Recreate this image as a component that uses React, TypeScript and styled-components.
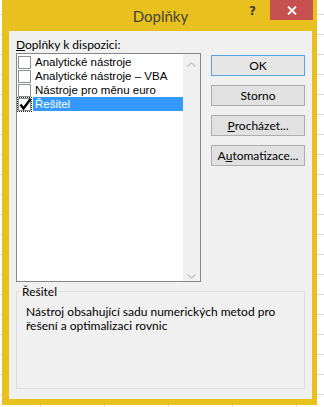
import React from 'react'
import styled, { createGlobalStyle } from 'styled-components'

const GlobalStyle = createGlobalStyle`
  html, body {
    margin: 0;
    padding: 0;
  }
  body {
    width: 324px;
    height: 407px;
    overflow: hidden;
    background-color: #fff;
    background-image:
      repeating-linear-gradient(to bottom, transparent 0, transparent 14px, #dadada 14px, #dadada 15px, transparent 15px, transparent 20px),
      repeating-linear-gradient(to right, transparent 0, transparent 40px, #dadada 40px, #dadada 41px, transparent 41px, transparent 64px);
    font-family: Lato, 'Noto Sans', sans-serif;
    font-size: 12px;
    color: #000;
  }
`

const Window = styled.div`
  margin-left: 2px;
  width: 315px;
  height: 405px;
  box-sizing: border-box;
  background: #e8c11e;
  padding: 0 5px 6px 7px;
  display: flex;
  flex-direction: column;
`

const TitleBar = styled.div`
  height: 31px;
  flex-shrink: 0;
  display: grid;
  grid-template-columns: 1fr auto 1fr;
`

const Title = styled.div`
  grid-column: 2;
  align-self: center;
  font-size: 15px;
  color: #454235;
`

const TitleControls = styled.div`
  display: flex;
  justify-content: flex-end;
  align-items: flex-start;
  margin-right: -1px;
`

const Help = styled.span`
  margin-top: 4px;
  margin-right: 14px;
  font-family: 'DejaVu Sans', sans-serif;
  font-weight: bold;
  font-size: 12px;
  color: #3a3a3a;
`

const Close = styled.div`
  width: 43px;
  height: 20px;
  background: #c75050;
  display: flex;
  align-items: center;
  justify-content: center;
`

const Client = styled.div`
  flex: 1;
  background: #f0f0f0;
  padding: 6px 7px 0 7px;
  display: grid;
  grid-template-columns: 185px 94px;
  grid-template-rows: 16px 229px auto;
  align-content: start;
  column-gap: 10px;
`

const Caption = styled.div`
  line-height: 16px;
  white-space: nowrap;
`

const Key = styled.span`
  text-decoration: underline;
`

const ListBox = styled.div`
  grid-column: 1;
  box-sizing: border-box;
  border: 1px solid #828790;
  background: #fff;
  display: flex;
`

const Items = styled.div`
  flex: 1;
  padding-top: 1px;
  font-family: 'Liberation Sans', Arial, sans-serif;
  font-size: 11.5px;
`

const Row = styled.div`
  height: 14px;
  display: flex;
  align-items: center;
`

const CheckBox = styled.span<{ $focus?: boolean }>`
  position: relative;
  width: 13px;
  height: 13px;
  box-sizing: border-box;
  margin-left: 1px;
  border: 1px solid #8e8f8f;
  background: #fff;
  flex-shrink: 0;
  outline: ${p => (p.$focus ? '1px dotted #222' : 'none')};
  outline-offset: 0;
`

const CheckMark = styled.svg`
  position: absolute;
  left: 0;
  top: -1px;
`

const ItemText = styled.span<{ $selected?: boolean }>`
  flex: 1;
  height: 14px;
  line-height: 14px;
  margin-left: 2px;
  padding-left: 2px;
  white-space: nowrap;
  background: ${p => (p.$selected ? '#3399ff' : 'transparent')};
  color: ${p => (p.$selected ? '#fff' : '#000')};
`

const ScrollBar = styled.div`
  width: 17px;
  background: #f0f0f0;
  display: flex;
  flex-direction: column;
  justify-content: space-between;
  align-items: center;
  padding: 8px 0 2px;
`

const Buttons = styled.div`
  grid-column: 2;
  grid-row: 2;
  padding-top: 2px;
  display: flex;
  flex-direction: column;
  gap: 9px;
`

const Button = styled.div<{ $default?: boolean }>`
  height: 21px;
  box-sizing: border-box;
  border: 1px solid ${p => (p.$default ? '#5aa1e6' : '#adadad')};
  background: ${p => (p.$default ? '#e6e6e6' : '#e1e1e1')};
  display: flex;
  align-items: center;
  justify-content: center;
  white-space: nowrap;
`

const Group = styled.fieldset`
  grid-column: 1 / span 2;
  grid-row: 3;
  margin: 2px 0 0;
  height: 105px;
  box-sizing: border-box;
  border: 1px solid #dcdcdc;
  padding: 6px 10px 0 9px;
`

const Legend = styled.legend`
  margin-left: -6px;
  padding: 0 2px;
  line-height: 15px;
`

const Description = styled.div`
  line-height: 14px;
`

const items = [
  { name: 'Analytické nástroje', checked: false },
  { name: 'Analytické nástroje – VBA', checked: false },
  { name: 'Nástroje pro měnu euro', checked: false },
  { name: 'Řešitel', checked: true, selected: true }
]

const Chevron = ({ up }: { up?: boolean }) => (
  <svg width='9' height='5' viewBox='0 0 9 5'>
    <polyline
      points={up ? '0.5,4.5 4.5,0.8 8.5,4.5' : '0.5,0.5 4.5,4.2 8.5,0.5'}
      fill='none'
      stroke='#c2c2c2'
      strokeWidth='1.2'
    />
  </svg>
)

const App: React.FC = () => {
  return (
    <>
      <GlobalStyle />
      <Window>
        <TitleBar>
          <Title>Doplňky</Title>
          <TitleControls>
            <Help>?</Help>
            <Close>
              <svg width='10' height='9' viewBox='0 0 10 9'>
                <path d='M1 0.5 L9 8.5 M9 0.5 L1 8.5' stroke='#fff' strokeWidth='1.8' />
              </svg>
            </Close>
          </TitleControls>
        </TitleBar>
        <Client>
          <Caption><Key>D</Key>oplňky k dispozici:</Caption>
          <ListBox>
            <Items>
              {items.map(item => (
                <Row key={item.name}>
                  <CheckBox $focus={item.selected}>
                    {item.checked && (
                      <CheckMark width='13' height='13' viewBox='0 0 13 13'>
                        <polyline points='1.5,6.5 4.5,10.5 11.5,1' fill='none' stroke='#000' strokeWidth='2.4' />
                      </CheckMark>
                    )}
                  </CheckBox>
                  <ItemText $selected={item.selected}>{item.name}</ItemText>
                </Row>
              ))}
            </Items>
            <ScrollBar>
              <Chevron up />
              <Chevron />
            </ScrollBar>
          </ListBox>
          <Buttons>
            <Button $default>OK</Button>
            <Button>Storno</Button>
            <Button><Key>P</Key>rocházet...</Button>
            <Button>A<Key>u</Key>tomatizace...</Button>
          </Buttons>
          <Group>
            <Legend>Řešitel</Legend>
            <Description>
              Nástroj obsahující sadu numerických metod pro<br />
              řešení a optimalizaci rovnic
            </Description>
          </Group>
        </Client>
      </Window>
    </>
  )
}

export default App
